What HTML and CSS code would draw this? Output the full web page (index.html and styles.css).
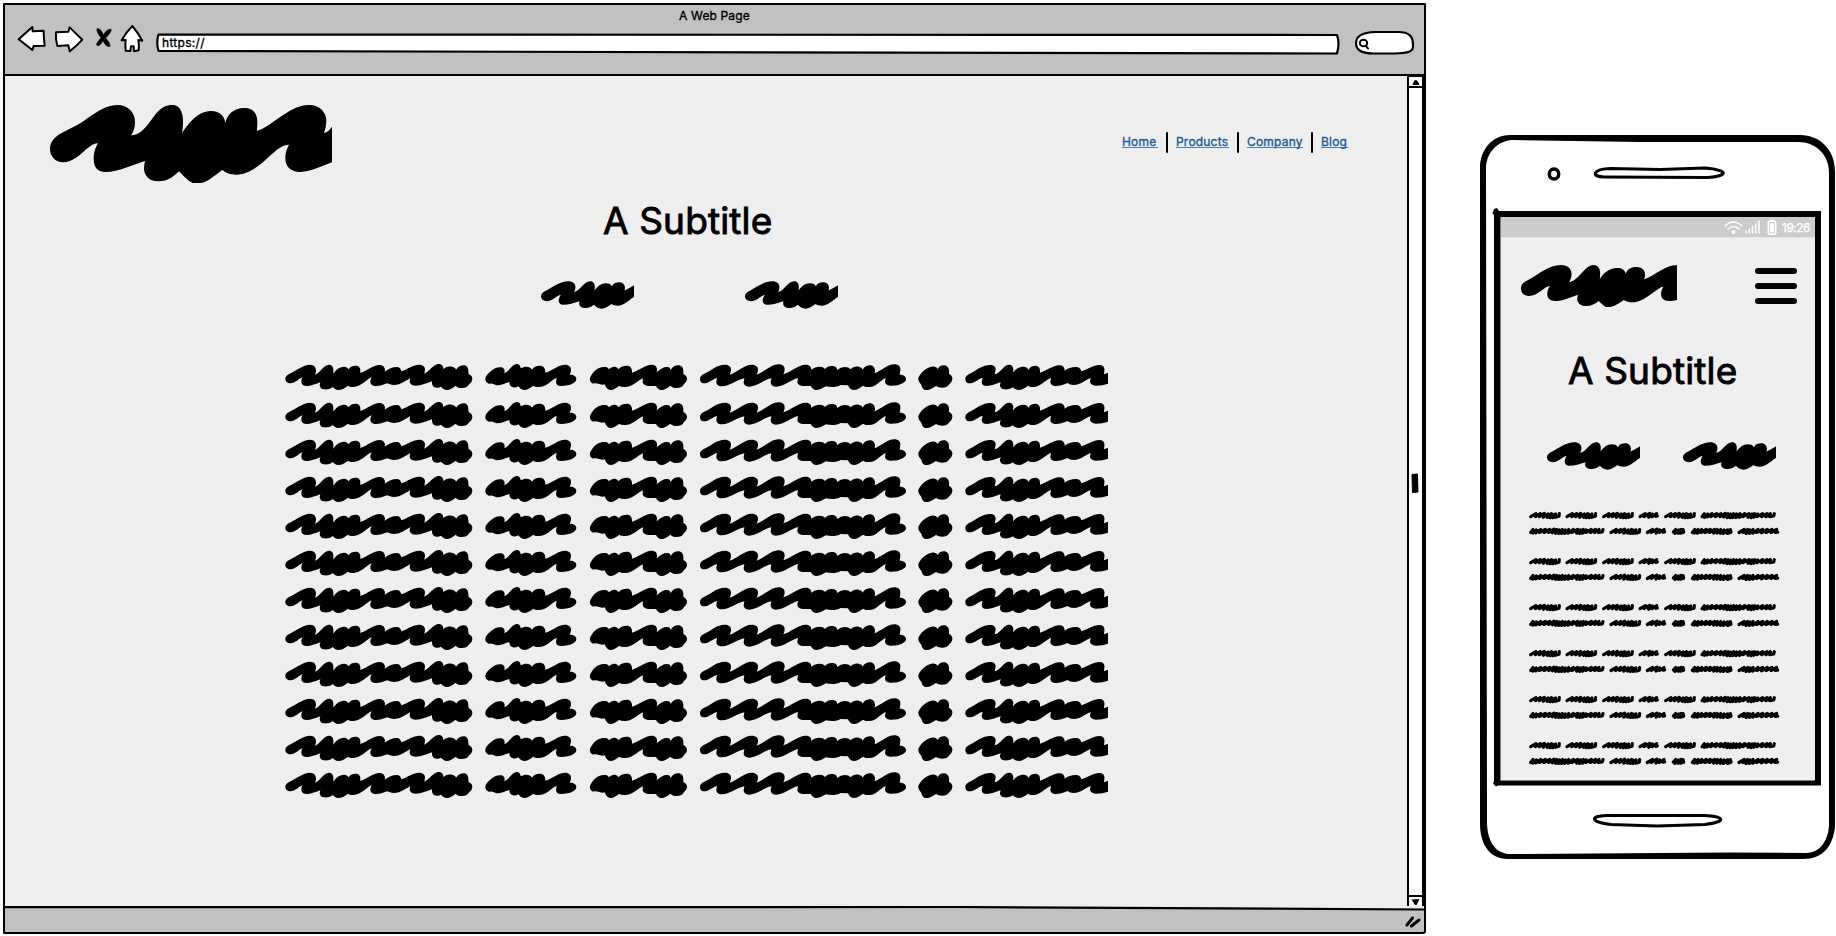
FILE: index.html
```html
<!DOCTYPE html>
<html lang="en">
<head>
<meta charset="utf-8">
<title>A Web Page</title>
<link rel="stylesheet" href="styles.css">
</head>
<body>
<svg class="defs" width="0" height="0" aria-hidden="true">
  <symbol id="scribble" viewBox="64 275 278 86" preserveAspectRatio="none">
    <path d="M82 337C71 337 64 330 64 322C64 312 72 308 80 304C100 293 122 276 145 276C160 276 167 284 167 294C167 299 165 304 163 309C180 306 192 276 211 276C221 276 225 284 225 293L224 304C232 292 244 282 258 282C268 282 273 286 276 291C280 282 289 279 298 279C309 279 315 287 315 296L314 304C324 300 332 294 342 288V324C328 332 312 351 293 351C285 351 279 350 275 346C264 354 255 360 245 360C235 360 228 355 222 348C214 355 206 358 198 358C184 358 178 351 178 344L179 337C162 342 146 348 132 348C121 348 117 342 117 335C117 328 120 323 123 318C112 319 98 337 82 337Z"/>
  </symbol>
  <symbol id="line" viewBox="15 45 2469 81">
    <path d="M32 103C22 103 16 97 16 90C16 82 24 76 32 73C50 63 70 48 90 47C103 47 108 56 108 64C108 69 107 72 105 77C118 74 130 47 147 47C156 47 160 54 160 62L160 74C166 64 178 53 192 53C200 53 204 58 206 61C210 53 218 50 227 50C237 50 241 57 241 64L241 72C260 66 280 48 298 48C310 48 315 56 315 63L314 68C325 60 338 54 350 54C358 54 363 60 364 67C382 60 400 47 418 47C430 47 435 54 435 62L433 74C446 70 460 45 477 45C486 45 490 52 490 60C500 53 508 52 515 53C524 54 527 58 528 62C535 52 543 49 551 49C561 49 565 57 565 68L566 75C573 78 577 84 577 89C577 97 572 103 568 105C563 114 555 117 545 117C537 117 530 114 527 110C517 117 510 123 501 123C492 123 486 116 483 113C478 116 473 117 469 116C461 116 456 110 456 102L456 97C440 102 425 110 407 110C394 110 389 103 389 97C389 93 390 90 391 87C380 93 362 108 342 108C332 108 327 105 322 103C310 108 298 111 288 111C277 111 271 105 271 98C271 93 273 89 275 85C262 88 245 114 220 114C212 114 208 113 204 110C193 118 185 123 175 123C167 123 162 118 158 114C150 121 140 122 132 121C123 120 119 114 119 107L121 100C105 106 92 111 81 111C70 111 64 106 64 98C64 92 66 88 68 85C58 88 45 103 32 103Z"/>
    <path d="M628 105C619 102 615 95 616 89C617 80 624 73 634 65C645 56 655 53 665 55C671 57 674 61 674 67L673 72C686 68 698 45 710 45C718 45 722 51 722 58C734 51 750 51 756 62C762 52 770 50 778 50C790 50 797 57 796 71C815 66 835 47 855 47C867 47 873 54 873 62C873 68 871 73 869 77C880 76 889 82 889 89C889 100 876 105 866 108C858 110 850 111 843 111C833 111 828 106 828 98L830 86C815 92 800 114 775 114C768 114 764 113 760 110C750 117 742 123 732 123C724 123 719 117 715 112C709 116 704 116 699 115C691 113 688 107 688 99C674 103 660 110 650 109C642 108 636 101 628 105Z"/>
    <path d="M940 104C932 102 928 94 930 87C934 75 950 55 969 54C977 53 984 54 987 61C993 54 1001 52 1007 54C1013 56 1015 59 1016 61C1022 52 1031 50 1040 50C1052 50 1057 58 1056 71C1078 64 1096 47 1114 47C1127 47 1132 54 1131 64L1130 70C1142 59 1152 53 1162 54C1168 55 1171 57 1172 63C1178 52 1186 49 1194 49C1205 49 1210 57 1210 65L1210 75C1218 79 1221 84 1221 90C1221 97 1216 102 1212 105C1208 114 1199 117 1190 117C1182 117 1175 115 1171 110C1161 117 1154 123 1145 123C1136 123 1131 117 1128 111L1105 111C1093 110 1088 104 1088 97L1089 88C1073 95 1058 114 1035 114C1027 114 1022 113 1018 110C1008 117 1001 123 991 123C983 123 978 116 974 106C964 110 950 99 940 104Z"/>
    <g transform="translate(1230 0)">
      <path d="M42 103C33 103 30 96 30 90C30 82 37 77 46 73C65 63 82 47 104 47C118 47 123 54 123 62C123 68 121 72 119 77C140 71 162 47 185 47C199 47 204 54 204 62C204 68 202 72 200 77C220 71 243 46 266 46C279 46 284 53 284 61C284 67 282 72 280 76C302 69 325 47 347 47C360 47 364 54 364 62C376 52 397 49 405 60C410 52 420 50 429 51C437 52 441 56 442 63C454 52 473 50 482 61C489 53 500 51 508 54C514 56 517 58 518 62C523 52 532 49 540 49C550 49 555 57 555 65L554 73C573 66 592 46 613 46C626 46 632 54 631 63L629 77C640 76 648 83 648 90C648 100 635 105 625 108C615 110 607 110 601 110C590 110 585 104 585 97L587 87C570 94 560 114 538 114C530 114 525 114 519 110C510 116 501 123 491 123C482 123 477 116 474 109L452 108C440 115 425 116 408 112C398 117 390 123 380 123C370 123 366 117 362 111L338 111C327 110 322 104 322 98L324 87C305 91 282 113 258 113C247 113 242 106 242 99L244 88C222 92 200 113 178 113C166 113 161 106 161 99L163 88C142 92 118 112 96 112C85 112 79 106 79 98L81 87C68 90 56 103 42 103Z"/>
      <path d="M694 107C687 100 684 93 685 87C690 73 708 55 725 53C735 52 741 55 743 60C747 52 754 49 761 49C772 49 777 57 777 66L777 74C785 79 788 84 787 91C786 98 782 103 778 106C773 114 765 116 757 116C749 116 744 114 738 111C728 117 720 123 710 123C700 123 697 118 694 107Z"/>
      <path d="M838 103C829 103 826 96 826 90C826 82 834 77 842 73C862 62 878 48 900 48C912 48 917 54 917 62L914 76C930 73 942 47 957 47C966 47 970 54 970 61L969 70C980 58 990 52 1001 53C1009 54 1013 56 1015 62C1021 52 1029 50 1036 50C1047 50 1051 58 1050 71C1070 66 1089 49 1107 49C1119 49 1124 55 1124 65C1134 57 1147 53 1160 54C1169 55 1173 60 1174 67C1192 61 1210 49 1228 48C1240 48 1245 56 1243 66L1242 76L1254 71V104C1244 107 1230 110 1218 110C1206 110 1200 104 1200 97L1202 87C1188 91 1172 108 1152 108C1143 108 1137 106 1133 102C1120 108 1107 111 1098 111C1087 111 1081 105 1081 98L1083 86C1068 91 1051 114 1030 114C1022 114 1019 113 1014 110C1004 117 996 123 986 123C977 123 972 119 969 115C960 121 950 122 941 121C933 119 929 114 930 107L932 100C917 105 903 111 891 111C880 111 875 106 875 98L878 86C866 89 852 103 838 103Z"/>
    </g>
  </symbol>
  <g id="w-mid"><path d="M5 38L21 29L19 38L34 29L31 38L46 28L43 40L57 30L55 40L67 29L63 41L72 31L71 41L80 30L79 40L90 37L91 29"/></g>
  <g id="w-short"><path d="M5 38L21 29L17 38L34 28L31 40L42 30L41 38L55 29L52 37L57 36"/></g>
  <g id="w-long"><path d="M5 38L12 29L12 40L22 30L20 39L35 29L31 38L49 29L45 38L62 29L59 38L75 28L70 39L83 29L80 41L91 30L89 41L100 29L97 41L109 30L107 41L119 29L117 40L133 29L128 38L146 29L143 40L155 30L152 41L163 29L160 40L172 30L170 38L187 29L184 38L200 29L197 38L210 29L208 38L220 36L222 29"/></g>
  <symbol id="para" viewBox="9 21 759 75">
    <g fill="none" stroke="#000" stroke-width="9.5" stroke-linecap="round" stroke-linejoin="round">
      <use href="#w-mid" x="12"/><use href="#w-mid" x="121"/><use href="#w-mid" x="231"/><use href="#w-short" x="340"/><use href="#w-mid" x="417"/><use href="#w-long" x="526"/>
      <g transform="translate(0 47.5)">
        <use href="#w-long" x="12"/><use href="#w-mid" x="253"/><use href="#w-short" x="362"/>
        <path d="M445 37L452 29L450 41L461 30L459 40L468 29L466 40L476 37L474 29M502 38L509 29L508 40L519 29L517 40L530 29L528 38L544 29L540 38L556 29L553 38L569 29L566 40L577 29L576 40L587 29L586 41L597 30L595 41L608 30L607 41L618 37L616 29M642 38L658 29L654 38L668 29L663 41L675 30L673 41L684 29L683 40L699 29L695 38L713 29L709 39L727 29L723 38L741 29L738 38L755 29L751 38L758 37"/>
      </g>
    </g>
  </symbol>
</svg>

<section class="browser">
  <header class="chrome">
    <div class="chrome-title">A Web Page</div>
    <div class="toolbar">
      <svg class="tool back" viewBox="51 72 90 96"><path d="M56 118L97 81L98 94L131 92Q131 115 134 137L101 138L97 150Z"/></svg>
      <svg class="tool forward" viewBox="162 72 90 96"><path d="M168 97Q186 96 205 95L209 82Q228 101 247 119Q230 138 209 154L205 136L172 138Q166 116 168 97Z"/></svg>
      <svg class="tool stop" viewBox="285 72 51 96"><path class="ink" d="M291 86Q302 84 310 105Q320 87 333 88Q337 92 317 114Q331 130 330 139Q319 143 309 122Q297 143 290 135Q288 131 303 113Q289 96 291 86Z"/></svg>
      <svg class="tool home" viewBox="360 72 72 96"><path d="M397 78Q414 98 427 122L415 120Q418 136 416 151L402 154L401 139H393L391 153L377 152Q375 136 377 120L365 121Q377 98 397 78Z"/></svg>
      <div class="url">
        <svg class="url-shape" viewBox="155 31 1186 26" preserveAspectRatio="none"><path d="M158.5 34.5Q700 33 1337 35Q1340 43 1337 53.5Q700 52.500 158.500 51Q156 42 158.500 34.500Z"/></svg>
        <span class="url-text">https://</span>
      </div>
      <svg class="tool search" viewBox="1353 24 63 32"><path class="thin" d="M1356 43C1356 37 1362 32.500 1375 32H1398C1409 32 1413 36 1413 45C1414 52 1408 53 1394 53.500H1373C1361 53 1356 50 1356 43Z"/><ellipse class="lens" cx="1363.500" cy="43" rx="3.700" ry="3.300"/><path class="lens" d="M1366 46L1368 48.500"/></svg>
    </div>
  </header>
  <div class="viewport">
    <main class="page">
      <div class="masthead">
        <svg class="logo" viewBox="150 315 846 234" role="img" aria-label="Logo"><path d="M190 487C165 487 150 468 150 447C150 425 165 412 178 403C200 390 225 380 247 366C280 343 315 315 352 315C385 315 405 338 405 365C405 385 400 395 393 406C415 406 430 390 445 372C465 347 480 315 517 315C540 315 549 338 549 362C549 378 548 390 546 400C560 378 590 333 632 333C662 333 674 350 676 370C680 345 700 324 733 324C760 324 772 342 772 365C772 378 771 385 771 393C790 388 812 371 835 355C865 335 890 315 928 315C962 315 979 340 979 362C979 378 975 390 972 399C982 397 989 390 996 380V487C970 495 935 516 900 516C870 516 856 498 856 475C856 455 862 445 867 434C845 434 830 450 810 467C785 490 750 524 710 524C690 524 678 519 667 510C645 525 620 549 600 549H578C560 540 545 522 537 514C520 530 505 544 475 544C445 544 432 525 432 505C432 497 434 490 435 483C400 494 355 516 317 516C290 516 281 500 281 475C281 455 288 440 294 430C278 430 262 445 245 460C230 473 212 487 190 487Z"/></svg>
        <nav class="nav"><a href="#" class="n1">Home</a><a href="#" class="n2">Products</a><a href="#" class="n3">Company</a><a href="#" class="n4">Blog</a></nav>
      </div>
      <h1 class="subtitle">A Subtitle</h1>
      <div class="actions"><svg><use href="#scribble"/></svg><svg><use href="#scribble"/></svg></div>
      <div class="rows">
        <svg><use href="#line"/></svg><svg><use href="#line"/></svg><svg><use href="#line"/></svg><svg><use href="#line"/></svg>
        <svg><use href="#line"/></svg><svg><use href="#line"/></svg><svg><use href="#line"/></svg><svg><use href="#line"/></svg>
        <svg><use href="#line"/></svg><svg><use href="#line"/></svg><svg><use href="#line"/></svg><svg><use href="#line"/></svg>
      </div>
    </main>
    <div class="scrollbar">
      <svg class="arrow" viewBox="0 0 12 9"><path d="M3 8Q6 -2 10 8Z"/></svg>
      <div class="track"><svg class="thumb" viewBox="0 0 9 21"><path d="M2 1.500L7.500 1L8 19L2.500 19.500Z" stroke="#000" stroke-linejoin="round"/></svg></div>
      <svg class="arrow down" viewBox="0 0 12 9"><path d="M2 2.500L10 2L7 8L5.500 8Z"/></svg>
    </div>
  </div>
  <footer class="statusline">
    <svg class="edge" viewBox="0 0 1419 6" preserveAspectRatio="none"><path d="M0 0H1419V3L700 1L0 1Z" fill="#eee"/><path d="M0 1.200L950 1L1419 3.500" fill="none" stroke="#000" stroke-width="2.200"/></svg>
    <svg class="grip" viewBox="0 0 16 13"><path d="M2 10L7.500 3M6.500 11L14 5"/></svg>
  </footer>
</section>

<section class="phone">
  <svg class="phone-frame" viewBox="1478 133 358 728">
    <path fill="#fff" d="M1510 135H1800C1820 135 1835 150 1835 171V828C1833 847 1823 858 1803 858H1508C1488 858 1480 843 1480 825V168C1480 150 1492 135 1510 135Z"/>
    <path fill-rule="evenodd" d="M1510 135H1800C1820 135 1835 150 1835 171V827C1833 846 1823 859 1803 859H1508C1488 859 1480 842 1480 824V168C1480 150 1492 135 1510 135ZM1512 140C1497 141 1486 153 1486 169L1487 821C1487 841 1495 853 1509 854L1730 852.500L1806 853C1821 853 1829 839 1829 823V172C1829 155 1816 142 1798 142H1640Z"/>
    <path fill-rule="evenodd" d="M1494 209L1497 208L1499 211H1821V785.500H1498L1496 786.500L1493 783.500L1494 781V215L1492.500 213ZM1500.500 217.500V780.500H1814.500V217.500Z"/>
    <ellipse cx="1554" cy="174" rx="4.700" ry="5" fill="#fff" stroke="#000" stroke-width="3.500"/>
    <path class="slot" d="M1604 177C1591 177 1592 169 1611 168.500L1660 169.500L1705 168C1729 170 1729 176 1707 177.500Z"/>
    <path class="slot" d="M1606 815.500L1704 815.500C1725 816 1727 822 1705 824.500L1657 826L1611 824.500C1590 822 1590 816 1606 815.500Z"/>
  </svg>
  <div class="screen">
    <div class="status">
      <svg class="wifi" viewBox="0 0 19 15"><path d="M1 6Q9.500 -2 18 6M4 9Q9.500 4 15 9"/><circle cx="9.500" cy="12" r="2"/></svg>
      <svg class="signal" viewBox="0 0 15 14"><path d="M1 11V13M4.300 9V13M7.500 6V13M10.700 4V13M14 1V13"/></svg>
      <svg class="battery" viewBox="0 0 10 17"><path d="M3 2Q5 .5 7 2"/><rect x="1.300" y="2.300" width="7.400" height="13" rx="1.500"/><path class="cell" d="M3 4.500H7V13.500H3Z"/></svg>
      <span class="clock">19:26</span>
    </div>
    <div class="m-head">
      <svg class="m-logo" viewBox="152 435 469 126" role="img" aria-label="Logo"><path d="M176 528C161 528 152 518 152 506C152 492 160 487 172 481C205 463 235 435 272 435C293 435 304 446 304 463C304 472 301 479 297 486C325 484 343 435 370 435C384 435 390 446 390 460L389 478C398 460 418 444 440 444C456 444 464 450 467 461C472 446 485 441 499 441C516 441 525 451 525 464L523 478C552 468 585 435 621 435V540C612 542 605 543 597 543C580 543 573 534 573 522C573 514 576 507 580 500C560 502 525 547 487 547C477 547 468 545 461 540C448 549 432 561 418 561H408C400 558 392 549 386 543C375 552 364 558 348 558C330 558 321 548 321 536L323 524C303 531 277 543 254 543C239 543 231 534 231 522C231 513 234 505 239 498C222 498 204 528 176 528Z"/></svg>
      <div class="burger"><i></i><i></i><i></i></div>
    </div>
    <h2 class="subtitle m-subtitle">A Subtitle</h2>
    <div class="m-actions"><svg><use href="#scribble"/></svg><svg><use href="#scribble"/></svg></div>
    <div class="m-text">
      <svg><use href="#para"/></svg><svg><use href="#para"/></svg><svg><use href="#para"/></svg>
      <svg><use href="#para"/></svg><svg><use href="#para"/></svg><svg><use href="#para"/></svg>
    </div>
  </div>
</section>
</body>
</html>
```
FILE: styles.css
```css
* { box-sizing: border-box; }
body {
  margin: 0;
  width: 1836px;
  height: 936px;
  overflow: hidden;
  display: flex;
  align-items: flex-start;
  background: #fff;
  color: #000;
  font-family: Inter, "Open Sans", sans-serif;
}
svg { display: block; flex: none; }
.defs { position: absolute; }

/* Browser window */
.browser {
  flex: none;
  width: 1423px;
  height: 931px;
  margin: 3px 0 0 3px;
  border: 2px solid #000;
  border-radius: 1px 1px 3px 1px;
  background: #c1c1c1;
  display: flex;
  flex-direction: column;
}
.chrome { height: 71px; border-bottom: 2px solid #000; }
.chrome-title {
  height: 19px;
  line-height: 22px;
  text-align: center;
  font-size: 12px;
  letter-spacing: .15px;
  -webkit-text-stroke: .35px #000;
}
.toolbar { display: flex; height: 32px; padding-left: 12px; }
.tool { height: 32px; }
.tool path { fill: #fff; stroke: #000; stroke-width: 6; stroke-linejoin: round; }
.tool .ink { fill: #000; stroke-width: 2; }
.tool .thin { stroke-width: 2.2; }
.tool .lens { fill: none; stroke: #000; stroke-width: 2; stroke-linecap: round; }
.back { width: 30px; }
.forward { width: 30px; margin-left: 7px; }
.stop { width: 17px; margin-left: 11px; }
.home { width: 24px; margin-left: 8px; }
.search { width: 63px; margin-left: 12px; }
.url { position: relative; width: 1186px; height: 26px; margin: 7px 0 0 11px; padding-left: 7px; }
.url-shape { position: absolute; inset: 0; width: 100%; height: 100%; }
.url-shape path { fill: #fff; stroke: #000; stroke-width: 2.2; stroke-linejoin: round; }
.url-text {
  position: relative;
  display: block;
  font-size: 12px;
  line-height: 24px;
  letter-spacing: .3px;
  -webkit-text-stroke: .35px #000;
}

.viewport { flex: 1; display: flex; background: #eee; }
.page { flex: 1; }
.masthead { display: flex; justify-content: space-between; padding: 29px 59px 0 45px; height: 107px; }
.logo { width: 282px; height: 78px; }
.nav { display: flex; height: 21px; margin-top: 27px; font-size: 12px; line-height: 19px; }
.nav a {
  height: 16px;
  color: #1a5c98;
  text-decoration: none;
  white-space: nowrap;
  letter-spacing: .2px;
  border-bottom: 1px solid #4a83b6;
  -webkit-text-stroke: .35px #1a5c98;
}
.nav a + a { position: relative; margin-left: 18px; }
.nav a + a::after {
  content: "";
  position: absolute;
  left: -10px;
  top: 0;
  width: 2px;
  height: 21px;
  background: #000;
  border-radius: 1px;
}
.n1 { width: 36px; }
.n2 { width: 53px; }
.n3 { width: 56px; }
.n4 { width: 27px; }
.subtitle {
  margin: 15px 0 0 598px;
  height: 46px;
  line-height: 46px;
  font-size: 37px;
  font-weight: 400;
  letter-spacing: .15px;
  white-space: nowrap;
  -webkit-text-stroke: .9px #000;
}
.actions { display: flex; gap: 111px; margin: 37px 0 0 536px; }
.actions svg, .m-actions svg { width: 93px; height: 28px; }
.rows { display: grid; gap: 10px; margin: 55px 0 0 280px; }
.rows svg { width: 823px; height: 27px; }
.rows svg:first-child { margin-bottom: 1px; }

.scrollbar {
  width: 17px;
  border-left: 2px solid #000;
  border-right: 2px solid #000;
  background: #fff;
  display: flex;
  flex-direction: column;
}
.arrow { width: 13px; height: 12px; border-top: 1px solid #000; border-bottom: 2px solid #000; }
.arrow.down { border-top-width: 2px; border-bottom-width: 1px; }
.track { flex: 1; }
.thumb { width: 9px; height: 21px; margin: 385px 0 0 1px; }

.statusline { position: relative; height: 25px; display: flex; justify-content: flex-end; }
.edge { position: absolute; left: 0; top: -1px; width: 100%; height: 6px; }
.grip { width: 16px; height: 13px; margin: 8px 3px 0 0; }
.grip path { fill: none; stroke: #000; stroke-width: 3; stroke-linecap: round; }

/* Phone */
.phone { position: relative; flex: none; width: 358px; height: 728px; margin: 133px 0 0 52px; padding: 84px 0 0 23px; }
.phone-frame { position: absolute; left: 0; top: 0; width: 358px; height: 728px; }
.slot { fill: #fff; stroke: #000; stroke-width: 3.2; stroke-linejoin: round; }
.screen { position: relative; width: 314px; height: 563px; background: #eee; }
.status {
  height: 21px;
  background: #ccc;
  display: flex;
  align-items: center;
  justify-content: flex-end;
  padding-right: 4px;
  border-bottom: 1px solid #e6e6e6;
}
.status path { fill: none; stroke: #fff; stroke-width: 1.5; stroke-linecap: round; }
.status circle, .status .cell { fill: #fff; stroke: none; }
.status rect { fill: none; stroke: #fff; stroke-width: 1.6; }
.wifi { width: 19px; height: 15px; }
.signal { width: 15px; height: 14px; margin-left: 2px; }
.battery { width: 10px; height: 17px; margin: 0 5px 0 7px; }
.clock { color: #fff; font-size: 12px; letter-spacing: -.5px; width: 29px; -webkit-text-stroke: .3px #fff; }
.m-head { display: flex; justify-content: space-between; padding: 27px 18px 0 20px; height: 92px; }
.m-logo { width: 156px; height: 42px; }
.burger { width: 42px; margin-top: 3px; display: flex; flex-direction: column; gap: 9px; }
.burger i { height: 6px; border-radius: 3px; background: #000; }
.m-subtitle { margin: 18px 0 0 67px; }
.m-actions { display: flex; gap: 43px; margin: 48px 0 0 46px; }
.m-text { display: grid; gap: 21px; margin: 41px 0 0 27px; }
.m-text svg { width: 253px; height: 25px; }
```
